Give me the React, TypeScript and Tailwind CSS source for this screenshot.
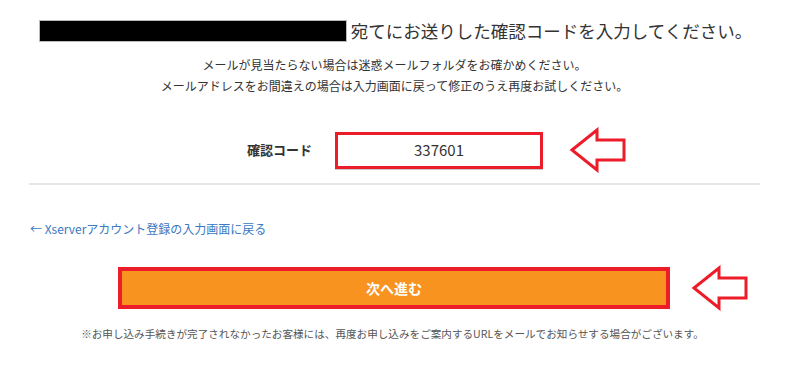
const jp = { fontFamily: '"Noto Sans CJK JP", "Noto Sans", sans-serif' };

function Arrow() {
  return (
    <svg width="58" height="46" viewBox="0 0 58 46" className="block shrink-0">
      <path
        d="M3 23 L28 3 L28 13 L55 13 L55 33 L28 33 L28 43 Z"
        fill="white"
        stroke="#ec1c29"
        strokeWidth="3"
        strokeLinejoin="miter"
      />
    </svg>
  );
}

export default function App() {
  return (
    <div className="w-[800px] h-[375px] overflow-hidden bg-white text-[#333]" style={jp}>
      <div className="w-[731px] ml-[29px]">
        {/* heading */}
        <div className="flex items-center justify-center h-[22px] mt-[20px] pl-[2px]">
          <span className="block w-[308px] h-[22px] bg-black border border-[#bbb]" />
          <span className="text-[17.5px] leading-[22px] ml-[4px] whitespace-nowrap">
            宛てにお送りした確認コードを入力してください。
          </span>
        </div>

        {/* notes */}
        <div className="mt-[12px] text-center text-[12px] leading-[21px]">
          <p>メールが見当たらない場合は迷惑メールフォルダをお確かめください。</p>
          <p>メールアドレスをお間違えの場合は入力画面に戻って修正のうえ再度お試しください。</p>
        </div>

        {/* code row */}
        <div className="flex items-center mt-[31px] pl-[218px]">
          <label className="w-[88px] text-[13px] font-bold text-[#333]">確認コード</label>
          <div className="w-[208px] h-[37px] border-[3px] border-[#ec1c29] shadow-[0_1px_0_#c8c8c8] flex items-center justify-center text-[15px] text-[#333]">
            337601
          </div>
          <div className="ml-[26px]">
            <Arrow />
          </div>
        </div>

        <div className="mt-[10px] h-[2px] bg-[#e6e6e6]" />

        {/* back link */}
        <div className="mt-[35px] text-[12px] leading-[18px] text-[#3a78c2] pl-[1px]">
          ← Xserverアカウント登録の入力画面に戻る
        </div>

        {/* submit */}
        <div className="flex items-center mt-[27px] pl-[89px]">
          <button className="w-[552px] h-[42px] border-[4px] border-[#ec1c29] bg-[#f7931e] text-white text-[14px] font-bold">
            次へ進む
          </button>
          <div className="ml-[21px]">
            <Arrow />
          </div>
        </div>

        <p className="mt-[15px] text-center text-[10.6px] leading-[16px] text-[#555] pr-[4px]">
          ※お申し込み手続きが完了されなかったお客様には、再度お申し込みをご案内するURLをメールでお知らせする場合がございます。
        </p>
      </div>
    </div>
  );
}
